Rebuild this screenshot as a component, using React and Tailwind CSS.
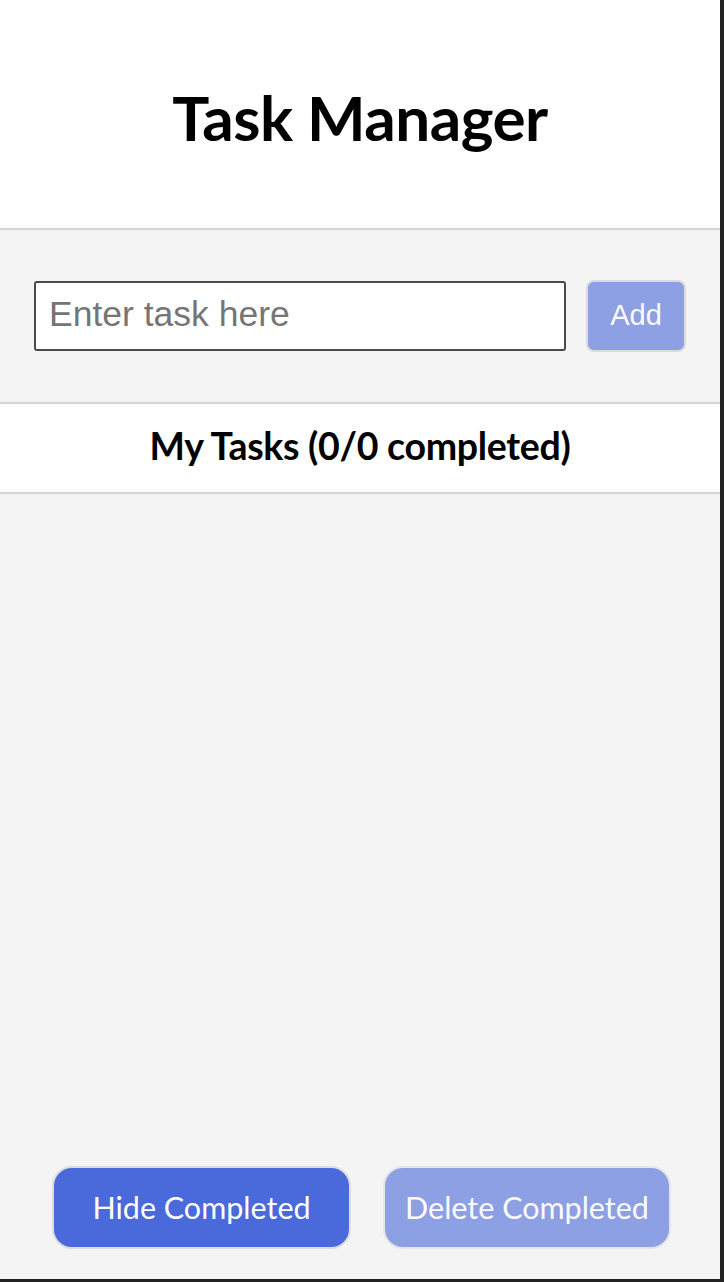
import React, { useState } from 'react';

const App = () => {
  const [task, setTask] = useState('');
  const tasks = [];
  const done = tasks.filter(t => t.done).length;

  return (
    <div className="w-[724px] h-[1282px] bg-[#222222]">
      <div className="w-[720px] h-[1279px] flex flex-col bg-[#f4f4f4] font-['Lato',sans-serif]">
        {/* Header */}
        <header className="h-[230px] shrink-0 flex items-center justify-center bg-white border-b-2 border-[#d6d6d6]">
          <h1 className="text-[62px] font-bold text-black leading-none mt-[6px] tracking-[-0.5px]">Task Manager</h1>
        </header>

        {/* New task */}
        <div className="h-[174px] shrink-0 flex items-center pl-[34px] gap-[20px] border-b-2 border-[#d6d6d6]">
          <input
            type="text"
            placeholder="Enter task here"
            value={task}
            onChange={(e) => setTask(e.target.value)}
            className="w-[532px] h-[70px] bg-white border-2 border-[#4a4a4a] rounded-[3px] pl-[13px] pr-[10px] pb-[4px] text-[35.5px] font-['Liberation_Sans',sans-serif] text-black placeholder-[#757575] focus:outline-none"
          />
          <button
            disabled
            className="w-[100px] h-[72px] rounded-[8px] border-2 border-[#cccccc] bg-[#4a69db] opacity-60 text-white text-[29px] font-['Liberation_Sans',sans-serif]"
          >
            Add
          </button>
        </div>

        {/* List header */}
        <div className="h-[90px] shrink-0 flex items-center justify-center bg-white border-b-2 border-[#d6d6d6]">
          <h2 className="text-[37.5px] font-bold text-black leading-none mb-[4px] tracking-[-0.3px]">My Tasks ({done}/{tasks.length} completed)</h2>
        </div>

        {/* List body */}
        <div className="flex-1 flex flex-col justify-end pb-[30px]">
          <div className="flex pl-[52px] gap-[32px]">
            <button className="w-[299px] h-[83px] rounded-[20px] border-2 border-[#dddddd] bg-[#4a69db] text-white text-[30.5px]">
              Hide Completed
            </button>
            <button disabled className="w-[288px] h-[83px] rounded-[20px] border-2 border-[#dddddd] bg-[#4a69db] opacity-60 text-white text-[30.5px]">
              Delete Completed
            </button>
          </div>
        </div>
      </div>
    </div>
  );
};

export default App;
